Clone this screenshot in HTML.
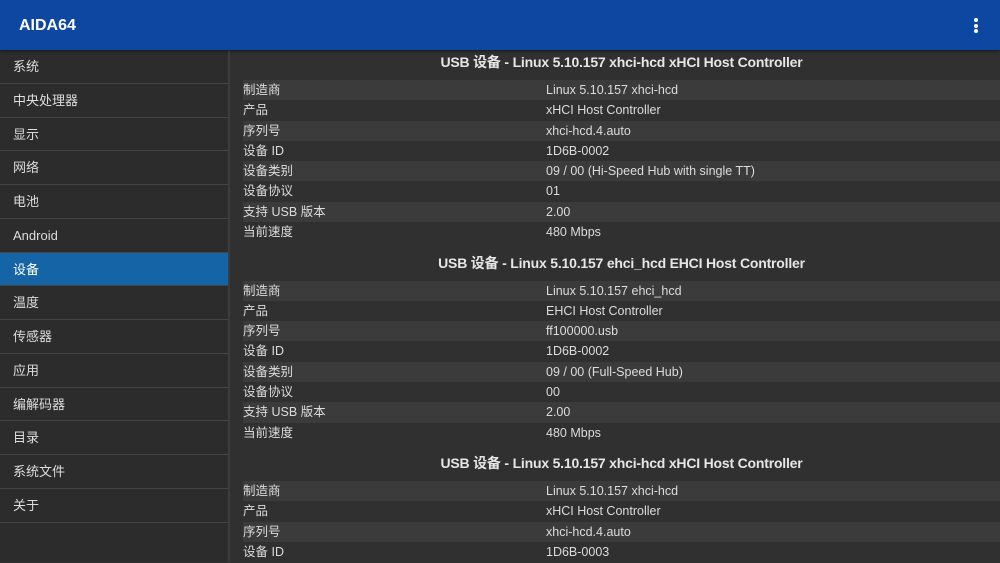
<!DOCTYPE html>
<html><head><meta charset="utf-8"><style>
*{margin:0;padding:0;box-sizing:border-box}
body{width:1000px;height:562px;overflow:hidden;background:#303030;font-family:"Liberation Sans","Noto Sans CJK SC",sans-serif;color:#dcdcdc;position:relative}
.hdr{position:absolute;left:0;top:0;width:1000px;height:50px;background:#0d47a1;box-shadow:0 1px 3px rgba(0,0,0,.5);z-index:2}
.hdr .t{position:absolute;left:19px;top:17px;font-size:16px;line-height:18px;font-weight:bold;color:#fff}
.dots{position:absolute;left:974px;top:18px;width:4px}
.dots i{display:block;width:4px;height:4px;border-radius:2px;background:#fff;margin-bottom:1.5px}
.side{position:absolute;left:0;top:50px;width:230px;height:512px;background:#2c2c2c;border-right:2px solid #3c3c3c}
.side div{height:33.75px;line-height:33px;padding-left:13px;font-size:13px;border-bottom:1.5px solid #444;color:#ddd}
.side .sel{background:#1565a6;color:#fff}
.sec{position:absolute;left:243px;width:757px}
.ti{height:38px;text-align:center;font-weight:bold;font-size:14px;line-height:40px;color:#e6e6e6;letter-spacing:-0.2px}
.r{height:20.3px;line-height:21px;font-size:12.5px;position:relative}
.r:nth-child(even){background:#3b3b3b}
.r span{position:absolute;left:303px}
</style></head><body>
<div class="hdr"><div class="t">AIDA64</div><div class="dots"><i></i><i></i><i></i></div></div>
<div class="side">
<div>系统</div><div>中央处理器</div><div>显示</div><div>网络</div><div>电池</div><div>Android</div><div class="sel">设备</div><div>温度</div><div>传感器</div><div>应用</div><div>编解码器</div><div>目录</div><div>系统文件</div><div>关于</div>
</div>
<div class="sec" style="top:42px">
<div class="ti">USB 设备 - Linux 5.10.157 xhci-hcd xHCI Host Controller</div>
<div class="r">制造商<span>Linux 5.10.157 xhci-hcd</span></div>
<div class="r">产品<span>xHCI Host Controller</span></div>
<div class="r">序列号<span>xhci-hcd.4.auto</span></div>
<div class="r">设备 ID<span>1D6B-0002</span></div>
<div class="r">设备类别<span>09 / 00 (Hi-Speed Hub with single TT)</span></div>
<div class="r">设备协议<span>01</span></div>
<div class="r">支持 USB 版本<span>2.00</span></div>
<div class="r">当前速度<span>480 Mbps</span></div>
</div>
<div class="sec" style="top:242.5px">
<div class="ti">USB 设备 - Linux 5.10.157 ehci_hcd EHCI Host Controller</div>
<div class="r">制造商<span>Linux 5.10.157 ehci_hcd</span></div>
<div class="r">产品<span>EHCI Host Controller</span></div>
<div class="r">序列号<span>ff100000.usb</span></div>
<div class="r">设备 ID<span>1D6B-0002</span></div>
<div class="r">设备类别<span>09 / 00 (Full-Speed Hub)</span></div>
<div class="r">设备协议<span>00</span></div>
<div class="r">支持 USB 版本<span>2.00</span></div>
<div class="r">当前速度<span>480 Mbps</span></div>
</div>
<div class="sec" style="top:443px">
<div class="ti">USB 设备 - Linux 5.10.157 xhci-hcd xHCI Host Controller</div>
<div class="r">制造商<span>Linux 5.10.157 xhci-hcd</span></div>
<div class="r">产品<span>xHCI Host Controller</span></div>
<div class="r">序列号<span>xhci-hcd.4.auto</span></div>
<div class="r">设备 ID<span>1D6B-0003</span></div>
</div>
</body></html>
